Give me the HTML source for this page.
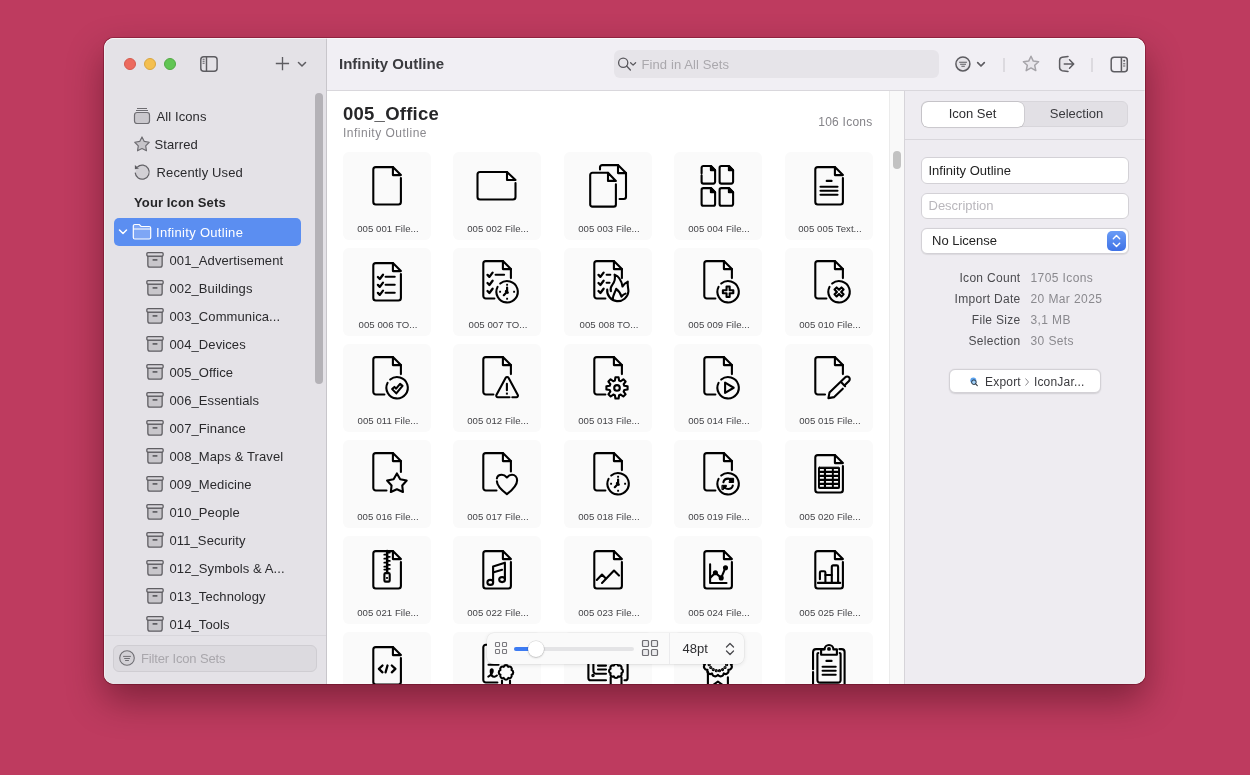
<!DOCTYPE html>
<html><head><meta charset="utf-8">
<style>
*{box-sizing:border-box;margin:0;padding:0}
html,body{width:1250px;height:775px;overflow:hidden}
body{background:#be3b5f;font-family:"Liberation Sans",sans-serif;position:relative;color:#262628}
.abs{position:absolute}
#win{will-change:transform;position:absolute;left:104px;top:38px;width:1041px;height:646px;border-radius:10px;overflow:hidden;background:#fff;
 box-shadow:0 0 0 1px rgba(80,0,20,.35),0 16px 36px rgba(40,0,10,.42)}
#side{position:absolute;left:0;top:0;width:223px;height:646px;background:#e4e2e7;border-right:1px solid #c8c6cb}
.tl{position:absolute;top:20px;width:12px;height:12px;border-radius:50%}
.item{position:absolute;left:0;height:28px;line-height:28px;font-size:13px;color:#2a2a2d;white-space:nowrap}
.set{position:absolute;left:42px;height:28px;line-height:28px;font-size:13px;color:#2a2a2d;white-space:nowrap}
.set .arch{position:absolute;left:0;top:6px}
.set span{position:absolute;left:23.5px;top:1px;letter-spacing:.1px}
#tb{position:absolute;left:223px;top:0;width:818px;height:53px;background:#f1eff4;border-bottom:1px solid #d9d7dc}
#content{position:absolute;left:223px;top:53px;width:577px;height:593px;background:#fff}
.cell{position:absolute;width:88px;height:88px;border-radius:6px;background:#fafafa}
.cell .ic{position:absolute;left:20px;top:10px;fill:none;stroke:#000;stroke-width:2.1;stroke-linecap:round;stroke-linejoin:round}
.cell .lbl{position:absolute;left:1px;top:70px;width:88px;text-align:center;font-size:9.6px;line-height:14px;color:#444448;white-space:nowrap;letter-spacing:.05px}
#insp{position:absolute;left:800px;top:53px;width:241px;height:593px;background:#eeecf1;border-left:1px solid #d6d4d9}
.field{position:absolute;left:16px;width:208px;background:#fff;border:1px solid #d3d1d6;border-radius:6px;font-size:13px;white-space:nowrap}
.rowl{position:absolute;right:124.5px;font-size:12px;color:#4a4a4e;white-space:nowrap;text-align:right;letter-spacing:.3px;margin-top:1px}
.rowv{position:absolute;left:125.5px;font-size:12px;color:#8a898e;white-space:nowrap;letter-spacing:.4px;margin-top:1px}
</style></head><body>
<div id="win">
 <div id="side">
  <div class="tl" style="left:20px;background:#ec6a5e;border:.5px solid #d55a4f"></div>
  <div class="tl" style="left:40px;background:#f4bf4f;border:.5px solid #d9a63f"></div>
  <div class="tl" style="left:60px;background:#61c554;border:.5px solid #52a944"></div>
  <svg class="abs" style="left:95px;top:17px" width="20" height="18" viewBox="0 0 20 18"><rect x="1.8" y="1.7" width="16.3" height="14.5" rx="3" fill="none" stroke="#5d5c61" stroke-width="1.45"/><path d="M7.5 1.7v14.5" stroke="#5d5c61" stroke-width="1.45"/><path d="M3.6 4.2h2M3.6 6.2h2M3.6 8.3h2" stroke="#5d5c61" stroke-width="1.1"/></svg>
  <svg class="abs" style="left:171px;top:18px" width="15" height="15" viewBox="0 0 15 15"><path d="M11.7 0.9v13.3M5 7.5h13.3" transform="translate(-4.2 0)" stroke="#5d5c61" stroke-width="1.35"/></svg>
  <svg class="abs" style="left:193px;top:23px" width="10" height="7" viewBox="0 0 10 7"><path d="M1.5 1.5l3.5 3.5 3.5-3.5" fill="none" stroke="#5d5c61" stroke-width="1.5" stroke-linecap="round" stroke-linejoin="round"/></svg>

  <div class="item" style="top:64px;left:29px">
   <svg class="abs" style="left:0;top:5px" width="18" height="18" viewBox="0 0 18 18"><path d="M4 1.5h10M3 3.5h12" stroke="#6e6d72" stroke-width="1"/><rect x="1.5" y="5.5" width="15" height="11" rx="2.5" fill="#cac8cd" stroke="#6e6d72" stroke-width="1.2"/></svg>
   <span class="abs" style="left:23.5px;top:1px;letter-spacing:.1px">All Icons</span></div>
  <div class="item" style="top:92px;left:29px">
   <svg class="abs" style="left:0;top:5px" width="18" height="18" viewBox="0 0 18 18"><path d="M9.00 2.00 L11.29 6.44 L16.23 7.25 L12.71 10.81 L13.47 15.75 L9.00 13.50 L4.53 15.75 L5.29 10.81 L1.77 7.25 L6.71 6.44z" fill="#c6c4c9" stroke="#6e6d72" stroke-width="1.2" stroke-linejoin="round"/></svg>
   <span class="abs" style="left:21.5px;top:1px;letter-spacing:.1px">Starred</span></div>
  <div class="item" style="top:120px;left:29px">
   <svg class="abs" style="left:0;top:5px" width="18" height="18" viewBox="0 0 18 18"><circle cx="9.1" cy="8.9" r="6.6" fill="#d2d0d5"/><path d="M4.4 4A7 7 0 1 1 2.2 9.6" fill="none" stroke="#626166" stroke-width="1.2"/><path d="M1.9 2v4.3l4-.7z" fill="#5d5c61"/></svg>
   <span class="abs" style="left:23.5px;top:1px;letter-spacing:.15px">Recently Used</span></div>
  <div class="item" style="top:151px;left:30px;font-weight:bold;color:#262628;letter-spacing:.12px">Your Icon Sets</div>
  <div class="abs" style="left:10px;top:180px;width:187px;height:28px;border-radius:5px;background:#5b8ef1"></div>
  <svg class="abs" style="left:14px;top:190px" width="10" height="8" viewBox="0 0 10 8"><path d="M1.5 2l3.5 3.5 3.5-3.5" fill="none" stroke="#fff" stroke-width="1.5" stroke-linecap="round" stroke-linejoin="round"/></svg>
  <svg class="abs" style="left:28px;top:185px" width="20" height="17" viewBox="0 0 20 17"><path d="M1.3 3a1.5 1.5 0 0 1 1.5-1.5h4.5l1.8 2h8.1a1.5 1.5 0 0 1 1.5 1.5v9.5a1.5 1.5 0 0 1-1.5 1.5H2.8a1.5 1.5 0 0 1-1.5-1.5z" fill="#7ea6f5" stroke="#fff" stroke-width="1.2"/><path d="M1.3 6h17.4" stroke="#fff" stroke-width="1.2"/></svg>
  <div class="item" style="top:181px;left:52px;color:#fff;letter-spacing:.3px">Infinity Outline</div>
  <div class="set" style="top:208px"><svg class="arch" width="18" height="17" viewBox="0 0 18 17"><path d="M1.85 4v9a2.2 2.2 0 0 0 2.2 2.2h9.9a2.2 2.2 0 0 0 2.2-2.2V4z" fill="#c8c6cb" stroke="#5f5e63" stroke-width="1.3"/><rect x=".85" y=".65" width="16.3" height="3.4" rx="1.1" fill="#d8d6db" stroke="#5f5e63" stroke-width="1.3"/><path d="M6.6 7.9h4.8" stroke="#5f5e63" stroke-width="1.7"/></svg><span>001_Advertisement</span></div><div class="set" style="top:236px"><svg class="arch" width="18" height="17" viewBox="0 0 18 17"><path d="M1.85 4v9a2.2 2.2 0 0 0 2.2 2.2h9.9a2.2 2.2 0 0 0 2.2-2.2V4z" fill="#c8c6cb" stroke="#5f5e63" stroke-width="1.3"/><rect x=".85" y=".65" width="16.3" height="3.4" rx="1.1" fill="#d8d6db" stroke="#5f5e63" stroke-width="1.3"/><path d="M6.6 7.9h4.8" stroke="#5f5e63" stroke-width="1.7"/></svg><span>002_Buildings</span></div><div class="set" style="top:264px"><svg class="arch" width="18" height="17" viewBox="0 0 18 17"><path d="M1.85 4v9a2.2 2.2 0 0 0 2.2 2.2h9.9a2.2 2.2 0 0 0 2.2-2.2V4z" fill="#c8c6cb" stroke="#5f5e63" stroke-width="1.3"/><rect x=".85" y=".65" width="16.3" height="3.4" rx="1.1" fill="#d8d6db" stroke="#5f5e63" stroke-width="1.3"/><path d="M6.6 7.9h4.8" stroke="#5f5e63" stroke-width="1.7"/></svg><span>003_Communica...</span></div><div class="set" style="top:292px"><svg class="arch" width="18" height="17" viewBox="0 0 18 17"><path d="M1.85 4v9a2.2 2.2 0 0 0 2.2 2.2h9.9a2.2 2.2 0 0 0 2.2-2.2V4z" fill="#c8c6cb" stroke="#5f5e63" stroke-width="1.3"/><rect x=".85" y=".65" width="16.3" height="3.4" rx="1.1" fill="#d8d6db" stroke="#5f5e63" stroke-width="1.3"/><path d="M6.6 7.9h4.8" stroke="#5f5e63" stroke-width="1.7"/></svg><span>004_Devices</span></div><div class="set" style="top:320px"><svg class="arch" width="18" height="17" viewBox="0 0 18 17"><path d="M1.85 4v9a2.2 2.2 0 0 0 2.2 2.2h9.9a2.2 2.2 0 0 0 2.2-2.2V4z" fill="#c8c6cb" stroke="#5f5e63" stroke-width="1.3"/><rect x=".85" y=".65" width="16.3" height="3.4" rx="1.1" fill="#d8d6db" stroke="#5f5e63" stroke-width="1.3"/><path d="M6.6 7.9h4.8" stroke="#5f5e63" stroke-width="1.7"/></svg><span>005_Office</span></div><div class="set" style="top:348px"><svg class="arch" width="18" height="17" viewBox="0 0 18 17"><path d="M1.85 4v9a2.2 2.2 0 0 0 2.2 2.2h9.9a2.2 2.2 0 0 0 2.2-2.2V4z" fill="#c8c6cb" stroke="#5f5e63" stroke-width="1.3"/><rect x=".85" y=".65" width="16.3" height="3.4" rx="1.1" fill="#d8d6db" stroke="#5f5e63" stroke-width="1.3"/><path d="M6.6 7.9h4.8" stroke="#5f5e63" stroke-width="1.7"/></svg><span>006_Essentials</span></div><div class="set" style="top:376px"><svg class="arch" width="18" height="17" viewBox="0 0 18 17"><path d="M1.85 4v9a2.2 2.2 0 0 0 2.2 2.2h9.9a2.2 2.2 0 0 0 2.2-2.2V4z" fill="#c8c6cb" stroke="#5f5e63" stroke-width="1.3"/><rect x=".85" y=".65" width="16.3" height="3.4" rx="1.1" fill="#d8d6db" stroke="#5f5e63" stroke-width="1.3"/><path d="M6.6 7.9h4.8" stroke="#5f5e63" stroke-width="1.7"/></svg><span>007_Finance</span></div><div class="set" style="top:404px"><svg class="arch" width="18" height="17" viewBox="0 0 18 17"><path d="M1.85 4v9a2.2 2.2 0 0 0 2.2 2.2h9.9a2.2 2.2 0 0 0 2.2-2.2V4z" fill="#c8c6cb" stroke="#5f5e63" stroke-width="1.3"/><rect x=".85" y=".65" width="16.3" height="3.4" rx="1.1" fill="#d8d6db" stroke="#5f5e63" stroke-width="1.3"/><path d="M6.6 7.9h4.8" stroke="#5f5e63" stroke-width="1.7"/></svg><span>008_Maps &amp; Travel</span></div><div class="set" style="top:432px"><svg class="arch" width="18" height="17" viewBox="0 0 18 17"><path d="M1.85 4v9a2.2 2.2 0 0 0 2.2 2.2h9.9a2.2 2.2 0 0 0 2.2-2.2V4z" fill="#c8c6cb" stroke="#5f5e63" stroke-width="1.3"/><rect x=".85" y=".65" width="16.3" height="3.4" rx="1.1" fill="#d8d6db" stroke="#5f5e63" stroke-width="1.3"/><path d="M6.6 7.9h4.8" stroke="#5f5e63" stroke-width="1.7"/></svg><span>009_Medicine</span></div><div class="set" style="top:460px"><svg class="arch" width="18" height="17" viewBox="0 0 18 17"><path d="M1.85 4v9a2.2 2.2 0 0 0 2.2 2.2h9.9a2.2 2.2 0 0 0 2.2-2.2V4z" fill="#c8c6cb" stroke="#5f5e63" stroke-width="1.3"/><rect x=".85" y=".65" width="16.3" height="3.4" rx="1.1" fill="#d8d6db" stroke="#5f5e63" stroke-width="1.3"/><path d="M6.6 7.9h4.8" stroke="#5f5e63" stroke-width="1.7"/></svg><span>010_People</span></div><div class="set" style="top:488px"><svg class="arch" width="18" height="17" viewBox="0 0 18 17"><path d="M1.85 4v9a2.2 2.2 0 0 0 2.2 2.2h9.9a2.2 2.2 0 0 0 2.2-2.2V4z" fill="#c8c6cb" stroke="#5f5e63" stroke-width="1.3"/><rect x=".85" y=".65" width="16.3" height="3.4" rx="1.1" fill="#d8d6db" stroke="#5f5e63" stroke-width="1.3"/><path d="M6.6 7.9h4.8" stroke="#5f5e63" stroke-width="1.7"/></svg><span>011_Security</span></div><div class="set" style="top:516px"><svg class="arch" width="18" height="17" viewBox="0 0 18 17"><path d="M1.85 4v9a2.2 2.2 0 0 0 2.2 2.2h9.9a2.2 2.2 0 0 0 2.2-2.2V4z" fill="#c8c6cb" stroke="#5f5e63" stroke-width="1.3"/><rect x=".85" y=".65" width="16.3" height="3.4" rx="1.1" fill="#d8d6db" stroke="#5f5e63" stroke-width="1.3"/><path d="M6.6 7.9h4.8" stroke="#5f5e63" stroke-width="1.7"/></svg><span>012_Symbols &amp; A...</span></div><div class="set" style="top:544px"><svg class="arch" width="18" height="17" viewBox="0 0 18 17"><path d="M1.85 4v9a2.2 2.2 0 0 0 2.2 2.2h9.9a2.2 2.2 0 0 0 2.2-2.2V4z" fill="#c8c6cb" stroke="#5f5e63" stroke-width="1.3"/><rect x=".85" y=".65" width="16.3" height="3.4" rx="1.1" fill="#d8d6db" stroke="#5f5e63" stroke-width="1.3"/><path d="M6.6 7.9h4.8" stroke="#5f5e63" stroke-width="1.7"/></svg><span>013_Technology</span></div><div class="set" style="top:572px"><svg class="arch" width="18" height="17" viewBox="0 0 18 17"><path d="M1.85 4v9a2.2 2.2 0 0 0 2.2 2.2h9.9a2.2 2.2 0 0 0 2.2-2.2V4z" fill="#c8c6cb" stroke="#5f5e63" stroke-width="1.3"/><rect x=".85" y=".65" width="16.3" height="3.4" rx="1.1" fill="#d8d6db" stroke="#5f5e63" stroke-width="1.3"/><path d="M6.6 7.9h4.8" stroke="#5f5e63" stroke-width="1.7"/></svg><span>014_Tools</span></div>
  <div class="abs" style="left:211px;top:55px;width:8px;height:291px;border-radius:4px;background:#b4b2b7"></div>
  <div class="abs" style="left:0;top:597px;width:222px;height:1px;background:#d8d6db"></div>
  <div class="abs" style="left:9px;top:607px;width:204px;height:27px;border-radius:6px;background:#dcdadf;border:1px solid #cfcdd2"></div>
  <svg class="abs" style="left:15px;top:612px" width="17" height="17" viewBox="0 0 17 17"><circle cx="8" cy="8" r="7.3" fill="#d3d1d6" stroke="#6f6e73" stroke-width="1.1"/><path d="M4.1 6.4h7.8M5.2 8.5h5.7M6.1 10.5h3.8" stroke="#6f6e73" stroke-width="1"/></svg>
  <div class="item" style="top:607px;left:37px;height:27px;line-height:27px;color:#a9a7ac;letter-spacing:-.15px">Filter Icon Sets</div>
 </div>

 <div id="tb">
  <div class="abs" style="left:12px;top:0;height:52px;line-height:52px;font-size:15px;font-weight:bold;color:#3b3b3f;white-space:nowrap">Infinity Outline</div>
  <div class="abs" style="left:287px;top:12px;width:325px;height:28px;border-radius:6px;background:#e6e4e9"></div>
  <svg class="abs" style="left:290px;top:56px;top:18px" width="24" height="18" viewBox="0 0 24 18"><circle cx="6.2" cy="6.7" r="4.6" fill="none" stroke="#5a595e" stroke-width="1.3"/><path d="M9.6 10.1l3.8 3.8" stroke="#5a595e" stroke-width="1.4" stroke-linecap="round"/><path d="M13.6 6.7l2.5 2.4 2.5-2.4" fill="none" stroke="#5a595e" stroke-width="1.3" stroke-linecap="round" stroke-linejoin="round"/></svg>
  <div class="abs" style="left:314.5px;top:13px;height:28px;line-height:28px;font-size:13px;color:#aaa8ad;white-space:nowrap;letter-spacing:.1px">Find in All Sets</div>

  <svg class="abs" style="left:626px;top:16px" width="20" height="20" viewBox="0 0 20 20"><circle cx="9.9" cy="9.9" r="7" fill="#e6e4e9" stroke="#5d5c61" stroke-width="1.5"/><path d="M6.1 8.3h7.8M7.1 10.2h5.9M8.4 12.3h3.4" stroke="#5d5c61" stroke-width="1.1"/></svg>
  <svg class="abs" style="left:648px;top:21.5px" width="12" height="8" viewBox="0 0 12 8"><path d="M2.7 2.7l3.3 3.3 3.3-3.3" fill="none" stroke="#5d5c61" stroke-width="1.7" stroke-linecap="round" stroke-linejoin="round"/></svg>
  <div class="abs" style="left:676.3px;top:20px;width:1.5px;height:14px;background:#dcdadf"></div>
  <svg class="abs" style="left:694px;top:16px" width="20" height="20" viewBox="0 0 20 20"><path d="M10 2.2l2.3 4.9 5.3.6-3.9 3.6 1.1 5.3L10 13.9l-4.8 2.7 1.1-5.3-3.9-3.6 5.3-.6z" fill="#e9e7ec" stroke="#a6a4a9" stroke-width="1.5" stroke-linejoin="round"/></svg>
  <svg class="abs" style="left:729px;top:16px" width="20" height="20" viewBox="0 0 20 20"><path d="M12 2.4L6.2 3.3C4.6 3.6 3.6 4.6 3.6 6.4V13.6C3.6 15.4 4.6 16.4 6.2 16.7L12 17.4" fill="#e8e6eb" stroke="#5d5c61" stroke-width="1.5" stroke-linecap="round"/><path d="M8.3 10h9.2M13.5 5.8l4.2 4.2-4.2 4.2" fill="none" stroke="#5d5c61" stroke-width="1.5" stroke-linecap="round" stroke-linejoin="round"/></svg>
  <div class="abs" style="left:764.3px;top:20px;width:1.5px;height:14px;background:#dcdadf"></div>
  <svg class="abs" style="left:782.8px;top:16.5px" width="20" height="18" viewBox="0 0 20 18"><rect x="11.4" y="2.3" width="5.9" height="14" fill="#e9e7ec"/><rect x="1.2" y="2.3" width="16.1" height="14.5" rx="3" fill="none" stroke="#5d5c61" stroke-width="1.5"/><path d="M11.4 2.3v14.5" stroke="#5d5c61" stroke-width="1.5"/><circle cx="14.2" cy="5.8" r="1" fill="#5d5c61"/><path d="M13.1 8.8h2.2M13.1 11h2.2" stroke="#5d5c61" stroke-width="1"/></svg>
 </div>

 <div id="content">
  <div class="abs" style="left:16px;top:11.5px;font-size:18.5px;font-weight:bold;color:#262628;line-height:22px;letter-spacing:.25px;white-space:nowrap">005_Office</div>
  <div class="abs" style="left:16px;top:35px;font-size:12px;color:#8a898e;line-height:14px;letter-spacing:.5px;white-space:nowrap">Infinity Outline</div>
  <div class="abs" style="right:31.5px;top:24px;font-size:12px;color:#858489;line-height:14px;white-space:nowrap;letter-spacing:.25px">106 Icons</div>
  <div class="cell" style="left:16px;top:61px"><svg class="ic" width="48" height="48" viewBox="0 0 48 48"><path d="M29.9 5.1H12.8a2.5 2.5 0 0 0-2.5 2.5V40.0a2.5 2.5 0 0 0 2.5 2.5H35.4a2.5 2.5 0 0 0 2.5-2.5V16.1"/><path d="M29.9 5.1V13.1H37.9z"/></svg><div class="lbl">005 001 File...</div></div>
<div class="cell" style="left:126px;top:61px"><svg class="ic" width="48" height="48" viewBox="0 0 48 48"><path d="M34 10H7a2.5 2.5 0 0 0-2.5 2.5v22.5a2.5 2.5 0 0 0 2.5 2.5h33a2.5 2.5 0 0 0 2.5-2.5V21"/><path d="M34 10v8h8.5z"/></svg><div class="lbl">005 002 File...</div></div>
<div class="cell" style="left:237px;top:61px"><svg class="ic" width="48" height="48" viewBox="0 0 48 48"><path d="M16 7.4V5.3a2.2 2.2 0 0 1 2.2-2.2H34l8 8v23.7a2.2 2.2 0 0 1-2.2 2.2H35.6"/><path d="M34 3.1v8h8"/><path d="M24 10.8H8.4a2.2 2.2 0 0 0-2.2 2.2v29.4a2.2 2.2 0 0 0 2.2 2.2h21.3a2.2 2.2 0 0 0 2.2-2.2V22.3"/><path d="M24 10.8v8.1h7.9z"/></svg><div class="lbl">005 003 File...</div></div>
<div class="cell" style="left:347px;top:61px"><svg class="ic" width="48" height="48" viewBox="0 0 48 48"><path d="M7.6 11.2V5.8a1.8 1.8 0 0 1 1.8-1.8H16.900000000000002l4.2 4.2V19.8a1.8 1.8 0 0 1-1.8 1.8h-9.9a1.8 1.8 0 0 1-1.8-1.8V13.4"/><path d="M16.900000000000002 4v4.2h4.2z" fill="#000"/><path d="M34.9 4H27.400000000000002a1.8 1.8 0 0 0-1.8 1.8V19.8a1.8 1.8 0 0 0 1.8 1.8h9.9a1.8 1.8 0 0 0 1.8-1.8V8.2z"/><path d="M34.9 4v4.2h4.2z" fill="#000"/><path d="M16.900000000000002 26.1H9.4a1.8 1.8 0 0 0-1.8 1.8V41.900000000000006a1.8 1.8 0 0 0 1.8 1.8h9.9a1.8 1.8 0 0 0 1.8-1.8V30.3z"/><path d="M16.900000000000002 26.1v4.2h4.2z" fill="#000"/><path d="M34.9 26.1H27.400000000000002a1.8 1.8 0 0 0-1.8 1.8V41.900000000000006a1.8 1.8 0 0 0 1.8 1.8h9.9a1.8 1.8 0 0 0 1.8-1.8V30.3z"/><path d="M34.9 26.1v4.2h4.2z" fill="#000"/></svg><div class="lbl">005 004 File...</div></div>
<div class="cell" style="left:458px;top:61px"><svg class="ic" width="48" height="48" viewBox="0 0 48 48"><path d="M29.9 5.1H12.8a2.5 2.5 0 0 0-2.5 2.5V40.0a2.5 2.5 0 0 0 2.5 2.5H35.4a2.5 2.5 0 0 0 2.5-2.5V16.1"/><path d="M29.9 5.1V13.1H37.9z"/><path d="M21.7 18.9H26.6"/><path d="M15.5 24.8H32.5"/><path d="M15.5 28.8H32.5"/><path d="M15.5 32.8H32.5"/></svg><div class="lbl">005 005 Text...</div></div>
<div class="cell" style="left:16px;top:157px"><svg class="ic" width="48" height="48" viewBox="0 0 48 48"><path d="M29.9 5.1H12.8a2.5 2.5 0 0 0-2.5 2.5V40.0a2.5 2.5 0 0 0 2.5 2.5H35.4a2.5 2.5 0 0 0 2.5-2.5V16.1"/><path d="M29.9 5.1V13.1H37.9z"/><path d="M14.9 19.0l1.9 2 3.2-4.3" stroke-width="2.3"/><path d="M14.9 26.9l1.9 2 3.2-4.3" stroke-width="2.3"/><path d="M14.9 34.900000000000006l1.9 2 3.2-4.3" stroke-width="2.3"/><path d="M22.6 18.8H31.7"/><path d="M22.6 26.7H31.7"/><path d="M22.6 34.7H31.7"/></svg><div class="lbl">005 006 TO...</div></div>
<div class="cell" style="left:126px;top:157px"><svg class="ic" width="48" height="48" viewBox="0 0 48 48"><path d="M29.9 3.1H12.8a2.5 2.5 0 0 0-2.5 2.5V38.0a2.5 2.5 0 0 0 2.5 2.5H21.4"/><path d="M29.9 3.1V11.1H37.9z"/><path d="M37.9 11.1V20.1"/><path d="M14.5 16.9l1.9 2 3.2-4.3" stroke-width="2.3"/><path d="M14.5 25.0l1.9 2 3.2-4.3" stroke-width="2.3"/><path d="M14.5 33.0l1.9 2 3.2-4.3" stroke-width="2.3"/><path d="M22.6 16.7H31.1"/><path d="M27.22 25.55A10.7 10.7 0 1 1 24.57 28.89"/><path d="M34.1 29.55V33.75l-3.3 3.4" stroke-width="2.2"/><path d="M33.1 33.15l1.5 1.5" stroke-width="2.6"/><rect x="33.15" y="25.8" width="1.9" height="1.9" fill="#000" stroke="none"/><rect x="33.15" y="39.8" width="1.9" height="1.9" fill="#000" stroke="none"/><rect x="26.150000000000002" y="32.8" width="1.9" height="1.9" fill="#000" stroke="none"/><rect x="40.15" y="32.8" width="1.9" height="1.9" fill="#000" stroke="none"/></svg><div class="lbl">005 007 TO...</div></div>
<div class="cell" style="left:237px;top:157px"><svg class="ic" width="48" height="48" viewBox="0 0 48 48"><path d="M29.9 3.1H12.8a2.5 2.5 0 0 0-2.5 2.5V38.0a2.5 2.5 0 0 0 2.5 2.5H21.4"/><path d="M29.9 3.1V11.1H37.9z"/><path d="M37.9 11.1V20.1"/><path d="M14.5 16.9l1.9 2 3.2-4.3" stroke-width="2.3"/><path d="M14.5 25.0l1.9 2 3.2-4.3" stroke-width="2.3"/><path d="M14.5 33.0l1.9 2 3.2-4.3" stroke-width="2.3"/><path d="M22.6 16.7H26.3"/><path d="M22.6 24.8H25.5"/><path d="M23.2 31.5A10.6 10.6 0 0 0 44.4 33.5C44.4 30 43.2 27 43.8 23.6C41.4 24.8 39.6 26.4 38.5 28.5C37.5 22.5 34.5 18.2 30.6 16.6C31.8 21.5 30.2 24.5 28.3 26.8C26.6 28.9 26.3 31.2 26.9 33.3"/><path d="M28.8 41.5C28.6 37.4 31.2 34.4 32.2 30.8C34.6 32.6 36.6 35.4 37.5 38.7C38.6 37.3 40 36.2 41.5 35.6"/></svg><div class="lbl">005 008 TO...</div></div>
<div class="cell" style="left:347px;top:157px"><svg class="ic" width="48" height="48" viewBox="0 0 48 48"><path d="M29.9 3.1H12.8a2.5 2.5 0 0 0-2.5 2.5V38.0a2.5 2.5 0 0 0 2.5 2.5H21.4"/><path d="M29.9 3.1V11.1H37.9z"/><path d="M37.9 11.1V20.1"/><path d="M27.22 25.55A10.7 10.7 0 1 1 24.57 28.89"/><path d="M32.55 28.55 L35.65 28.55 L35.65 32.20 L39.30 32.20 L39.30 35.30 L35.65 35.30 L35.65 38.95 L32.55 38.95 L32.55 35.30 L28.90 35.30 L28.90 32.20 L32.55 32.20z"/></svg><div class="lbl">005 009 File...</div></div>
<div class="cell" style="left:458px;top:157px"><svg class="ic" width="48" height="48" viewBox="0 0 48 48"><path d="M29.9 3.1H12.8a2.5 2.5 0 0 0-2.5 2.5V38.0a2.5 2.5 0 0 0 2.5 2.5H21.4"/><path d="M29.9 3.1V11.1H37.9z"/><path d="M37.9 11.1V20.1"/><path d="M27.17 25.55A10.7 10.7 0 1 1 24.52 28.89"/><path d="M36.50 29.37 L38.58 31.45 L36.13 33.90 L38.58 36.35 L36.50 38.43 L34.05 35.98 L31.60 38.43 L29.52 36.35 L31.97 33.90 L29.52 31.45 L31.60 29.37 L34.05 31.82z"/></svg><div class="lbl">005 010 File...</div></div>
<div class="cell" style="left:16px;top:253px"><svg class="ic" width="48" height="48" viewBox="0 0 48 48"><path d="M29.9 3.1H12.8a2.5 2.5 0 0 0-2.5 2.5V38.0a2.5 2.5 0 0 0 2.5 2.5H21.4"/><path d="M29.9 3.1V11.1H37.9z"/><path d="M37.9 11.1V20.1"/><path d="M27.22 25.55A10.7 10.7 0 1 1 24.57 28.89"/><path d="M29.15 35.11 L33.29 39.39 L39.53 31.93 L37.07 29.87 L33.11 34.61 L31.45 32.89z"/></svg><div class="lbl">005 011 File...</div></div>
<div class="cell" style="left:126px;top:253px"><svg class="ic" width="48" height="48" viewBox="0 0 48 48"><path d="M29.9 3.1H12.8a2.5 2.5 0 0 0-2.5 2.5V38.0a2.5 2.5 0 0 0 2.5 2.5H20.4"/><path d="M29.9 3.1V11.1H37.9z"/><path d="M37.9 11.1V20.1"/><g transform="translate(.5 0)"><path d="M36 43.3H24.3a1.6 1.6 0 0 1-1.4-2.3l9.3-17.2a1.6 1.6 0 0 1 2.8 0l9.3 17.2a1.6 1.6 0 0 1-1.4 2.3h-4.1"/><path d="M33.4 29.7v6.5"/><rect x="32.4" y="38.6" width="2" height="2" fill="#000" stroke="none"/></g></svg><div class="lbl">005 012 File...</div></div>
<div class="cell" style="left:237px;top:253px"><svg class="ic" width="48" height="48" viewBox="0 0 48 48"><path d="M29.9 3.1H12.8a2.5 2.5 0 0 0-2.5 2.5V38.0a2.5 2.5 0 0 0 2.5 2.5H21.4"/><path d="M29.9 3.1V11.1H37.9z"/><path d="M37.9 11.1V20.1"/><path d="M40.30 31.80 L43.58 32.30 L43.58 35.50 L40.30 36.00 L39.65 37.58 L41.61 40.25 L39.35 42.51 L36.68 40.55 L35.10 41.20 L34.60 44.48 L31.40 44.48 L30.90 41.20 L29.32 40.55 L26.65 42.51 L24.39 40.25 L26.35 37.58 L25.70 36.00 L22.42 35.50 L22.42 32.30 L25.70 31.80 L26.35 30.22 L24.39 27.55 L26.65 25.29 L29.32 27.25 L30.90 26.60 L31.40 23.32 L34.60 23.32 L35.10 26.60 L36.68 27.25 L39.35 25.29 L41.61 27.55 L39.65 30.22z"/><circle cx="33.0" cy="33.9" r="2.8"/></svg><div class="lbl">005 013 File...</div></div>
<div class="cell" style="left:347px;top:253px"><svg class="ic" width="48" height="48" viewBox="0 0 48 48"><path d="M29.9 3.1H12.8a2.5 2.5 0 0 0-2.5 2.5V38.0a2.5 2.5 0 0 0 2.5 2.5H21.4"/><path d="M29.9 3.1V11.1H37.9z"/><path d="M37.9 11.1V20.1"/><path d="M27.22 25.55A10.7 10.7 0 1 1 24.57 28.89"/><path d="M31.1 28.6v10.3l8.6-5.15z"/></svg><div class="lbl">005 014 File...</div></div>
<div class="cell" style="left:458px;top:253px"><svg class="ic" width="48" height="48" viewBox="0 0 48 48"><path d="M29.9 3.1H12.8a2.5 2.5 0 0 0-2.5 2.5V38.0a2.5 2.5 0 0 0 2.5 2.5H20"/><path d="M29.9 3.1V11.1H37.9z"/><path d="M37.9 11.1V20.1"/><path d="M37.8 34.7L29.2 43.1 23.4 44.1 24.5 38.6 40.3 23.2a2.6 2.6 0 0 1 3.7 3.7L39.9 31"/><path d="M36.5 28.6l3.6 3.6"/></svg><div class="lbl">005 015 File...</div></div>
<div class="cell" style="left:16px;top:349px"><svg class="ic" width="48" height="48" viewBox="0 0 48 48"><path d="M29.9 3.1H12.8a2.5 2.5 0 0 0-2.5 2.5V38.0a2.5 2.5 0 0 0 2.5 2.5H23.5"/><path d="M29.9 3.1V11.1H37.9z"/><path d="M37.9 11.1V22"/><path d="M33.90 23.40 L37.19 29.17 L43.70 30.52 L39.23 35.43 L39.95 42.03 L33.90 39.30 L27.85 42.03 L28.57 35.43 L24.10 30.52 L30.61 29.17z"/></svg><div class="lbl">005 016 File...</div></div>
<div class="cell" style="left:126px;top:349px"><svg class="ic" width="48" height="48" viewBox="0 0 48 48"><path d="M29.9 3.1H12.8a2.5 2.5 0 0 0-2.5 2.5V38.0a2.5 2.5 0 0 0 2.5 2.5H23.5"/><path d="M29.9 3.1V11.1H37.9z"/><path d="M37.9 11.1V21.4"/><path transform="translate(.5 0)" d="M23.4 28.4C23.8 26.2 25.7 24.8 28.3 24.8C30.3 24.8 31.9 25.8 33.4 27.5C34.9 25.8 36.5 24.8 38.5 24.8C41.5 24.8 43.6 27.2 43.6 30.5C43.6 36 38.5 40.3 33.4 44.2C28.3 40.3 23.4 36 23.4 31.3"/></svg><div class="lbl">005 017 File...</div></div>
<div class="cell" style="left:237px;top:349px"><svg class="ic" width="48" height="48" viewBox="0 0 48 48"><path d="M29.9 3.1H12.8a2.5 2.5 0 0 0-2.5 2.5V38.0a2.5 2.5 0 0 0 2.5 2.5H21.4"/><path d="M29.9 3.1V11.1H37.9z"/><path d="M37.9 11.1V20.1"/><path d="M27.22 25.55A10.7 10.7 0 1 1 24.57 28.89"/><path d="M34.1 29.55V33.75l-3.3 3.4" stroke-width="2.2"/><path d="M33.1 33.15l1.5 1.5" stroke-width="2.6"/><rect x="33.15" y="25.8" width="1.9" height="1.9" fill="#000" stroke="none"/><rect x="33.15" y="39.8" width="1.9" height="1.9" fill="#000" stroke="none"/><rect x="26.150000000000002" y="32.8" width="1.9" height="1.9" fill="#000" stroke="none"/><rect x="40.15" y="32.8" width="1.9" height="1.9" fill="#000" stroke="none"/></svg><div class="lbl">005 018 File...</div></div>
<div class="cell" style="left:347px;top:349px"><svg class="ic" width="48" height="48" viewBox="0 0 48 48"><path d="M29.9 3.1H12.8a2.5 2.5 0 0 0-2.5 2.5V38.0a2.5 2.5 0 0 0 2.5 2.5H21.4"/><path d="M29.9 3.1V11.1H37.9z"/><path d="M37.9 11.1V20.1"/><path d="M27.22 25.55A10.7 10.7 0 1 1 24.57 28.89"/><g transform="translate(.5 0)"><path d="M28.9 32.2C29.4 29.9 31.3 28.6 33.6 28.6C35.1 28.6 36.3 29.2 37.1 30.2"/><path d="M36 28.3h3.1v4.2h-4.2z" fill="#000" stroke-width="1"/><path d="M38.3 35.6C37.8 37.8 35.9 39 33.6 39C32.2 39 31 38.4 30.1 37.5"/><path d="M27.8 35.3h4.1v1.2l-2.9 3.1h-1.2z" fill="#000" stroke-width="1"/></g></svg><div class="lbl">005 019 File...</div></div>
<div class="cell" style="left:458px;top:349px"><svg class="ic" width="48" height="48" viewBox="0 0 48 48"><path d="M29.9 5.1H12.8a2.5 2.5 0 0 0-2.5 2.5V40.0a2.5 2.5 0 0 0 2.5 2.5H35.4a2.5 2.5 0 0 0 2.5-2.5V16.1"/><path d="M29.9 5.1V13.1H37.9z"/><rect x="13.5" y="17.2" width="21" height="21.3" rx=".8" fill="#000" stroke-width="1"/><rect x="14.9" y="18.9" width="4" height="1.8" rx=".3" fill="#fafafa" stroke="none"/><rect x="21" y="18.9" width="5.9" height="1.8" rx=".3" fill="#fafafa" stroke="none"/><rect x="28.8" y="18.9" width="4.3" height="1.8" rx=".3" fill="#fafafa" stroke="none"/><rect x="14.9" y="22.9" width="4" height="1.8" rx=".3" fill="#fafafa" stroke="none"/><rect x="21" y="22.9" width="5.9" height="1.8" rx=".3" fill="#fafafa" stroke="none"/><rect x="28.8" y="22.9" width="4.3" height="1.8" rx=".3" fill="#fafafa" stroke="none"/><rect x="14.9" y="26.9" width="4" height="1.8" rx=".3" fill="#fafafa" stroke="none"/><rect x="21" y="26.9" width="5.9" height="1.8" rx=".3" fill="#fafafa" stroke="none"/><rect x="28.8" y="26.9" width="4.3" height="1.8" rx=".3" fill="#fafafa" stroke="none"/><rect x="14.9" y="31" width="4" height="1.8" rx=".3" fill="#fafafa" stroke="none"/><rect x="21" y="31" width="5.9" height="1.8" rx=".3" fill="#fafafa" stroke="none"/><rect x="28.8" y="31" width="4.3" height="1.8" rx=".3" fill="#fafafa" stroke="none"/><rect x="14.9" y="35" width="4" height="1.8" rx=".3" fill="#fafafa" stroke="none"/><rect x="21" y="35" width="5.9" height="1.8" rx=".3" fill="#fafafa" stroke="none"/><rect x="28.8" y="35" width="4.3" height="1.8" rx=".3" fill="#fafafa" stroke="none"/></svg><div class="lbl">005 020 File...</div></div>
<div class="cell" style="left:16px;top:445px"><svg class="ic" width="48" height="48" viewBox="0 0 48 48"><path d="M29.9 5.1H12.8a2.5 2.5 0 0 0-2.5 2.5V40.0a2.5 2.5 0 0 0 2.5 2.5H35.4a2.5 2.5 0 0 0 2.5-2.5V16.1"/><path d="M29.9 5.1V13.1H37.9z"/><path d="M24.15 5.1V26.6" stroke-width="2.5"/><path d="M21.3 8.7h2.5" stroke-width="1.8"/><path d="M21.3 12.7h2.5" stroke-width="1.8"/><path d="M21.3 16.7h2.5" stroke-width="1.8"/><path d="M21.3 20.7h2.5" stroke-width="1.8"/><path d="M21.3 23.6h2.5" stroke-width="1.8"/><path d="M24.5 6.5h2.3" stroke-width="1.8"/><path d="M24.5 10.8h2.3" stroke-width="1.8"/><path d="M24.5 14.9h2.3" stroke-width="1.8"/><path d="M24.5 18.9h2.3" stroke-width="1.8"/><path d="M24.5 22.9h2.3" stroke-width="1.8"/><rect x="21.4" y="27.1" width="5.3" height="8.5" rx="1.2"/><rect x="23.1" y="31" width="1.8" height="1.9" fill="#000" stroke="none"/></svg><div class="lbl">005 021 File...</div></div>
<div class="cell" style="left:126px;top:445px"><svg class="ic" width="48" height="48" viewBox="0 0 48 48"><path d="M29.9 5.1H12.8a2.5 2.5 0 0 0-2.5 2.5V40.0a2.5 2.5 0 0 0 2.5 2.5H35.4a2.5 2.5 0 0 0 2.5-2.5V16.1"/><path d="M29.9 5.1V13.1H37.9z"/><g transform="translate(.5 0)"><path d="M19.6 35.5V20.4L31.4 16.7V33.2"/><path d="M20.2 26.3L28.6 23.8"/><ellipse cx="16.8" cy="36.4" rx="2.9" ry="2.5"/><ellipse cx="28.6" cy="33.6" rx="2.9" ry="2.5"/></g></svg><div class="lbl">005 022 File...</div></div>
<div class="cell" style="left:237px;top:445px"><svg class="ic" width="48" height="48" viewBox="0 0 48 48"><path d="M29.9 5.1H12.8a2.5 2.5 0 0 0-2.5 2.5V40.0a2.5 2.5 0 0 0 2.5 2.5H35.4a2.5 2.5 0 0 0 2.5-2.5V16.1"/><path d="M29.9 5.1V13.1H37.9z"/><path d="M12.8 33.9L18 28.6L21.6 32.2"/><path d="M18 36.9L30 24.5L35 29.6"/></svg><div class="lbl">005 023 File...</div></div>
<div class="cell" style="left:347px;top:445px"><svg class="ic" width="48" height="48" viewBox="0 0 48 48"><path d="M29.9 5.1H12.8a2.5 2.5 0 0 0-2.5 2.5V40.0a2.5 2.5 0 0 0 2.5 2.5H35.4a2.5 2.5 0 0 0 2.5-2.5V16.1"/><path d="M29.9 5.1V13.1H37.9z"/><g transform="translate(.5 0)"><path d="M15.6 18.2V37H32"/><path d="M15.8 31.8L20.9 26.8L26.7 31.9L31 21.7"/><circle cx="20.9" cy="26.8" r="1.5" fill="#000"/><circle cx="26.7" cy="31.9" r="1.5" fill="#000"/><circle cx="31" cy="21.7" r="1.5" fill="#000"/></g></svg><div class="lbl">005 024 File...</div></div>
<div class="cell" style="left:458px;top:445px"><svg class="ic" width="48" height="48" viewBox="0 0 48 48"><path d="M29.9 5.1H12.8a2.5 2.5 0 0 0-2.5 2.5V40.0a2.5 2.5 0 0 0 2.5 2.5H35.4a2.5 2.5 0 0 0 2.5-2.5V16.1"/><path d="M29.9 5.1V13.1H37.9z"/><path d="M12.9 36.9H35.2"/><path d="M14.9 33.3V26.6a1.3 1.3 0 0 1 1.3-1.3h2.9a1.3 1.3 0 0 1 1.3 1.3V36.9"/><path d="M20.4 29h6.4"/><path d="M26.8 36.9V20.7a1.3 1.3 0 0 1 1.3-1.3h3.7a1.3 1.3 0 0 1 1.3 1.3V36.9"/></svg><div class="lbl">005 025 File...</div></div>
<div class="cell" style="left:16px;top:541px"><svg class="ic" width="48" height="48" viewBox="0 0 48 48"><path d="M29.9 5.1H12.8a2.5 2.5 0 0 0-2.5 2.5V40.0a2.5 2.5 0 0 0 2.5 2.5H35.4a2.5 2.5 0 0 0 2.5-2.5V16.1"/><path d="M29.9 5.1V13.1H37.9z"/><path d="M19.5 23.5L15.9 26.9L19.5 30.3" stroke-width="2.3"/><path d="M24.5 23.5L22.6 30.3" stroke-width="2.3"/><path d="M28.8 23.5L32.4 26.9L28.8 30.3" stroke-width="2.3"/></svg><div class="lbl">005 026 File...</div></div>
<div class="cell" style="left:126px;top:541px"><svg class="ic" width="48" height="48" viewBox="0 0 48 48"><g transform="translate(.5 0)"><path d="M14 2.7H12.3a2.5 2.5 0 0 0-2.5 2.5V38a2.5 2.5 0 0 0 2.5 2.5H23.9"/><path d="M15 22.8H25"/><path d="M14.8 34.6C17 33.5 19.8 30.5 19.2 28.2C18.7 26.5 16.8 27.2 17.2 29.8C17.5 32.5 18.5 35 21 34.8C22 34.7 22.8 34 23.4 33.5"/><path d="M38.04 32.70A2.41 2.41 0 0 1 34.80 35.94A2.41 2.41 0 0 1 30.20 35.94A2.41 2.41 0 0 1 26.96 32.70A2.41 2.41 0 0 1 26.96 28.10A2.41 2.41 0 0 1 30.20 24.86A2.41 2.41 0 0 1 34.80 24.86A2.41 2.41 0 0 1 38.04 28.10A2.41 2.41 0 0 1 38.04 32.70z"/><path d="M28.5 38.5V45M36.5 38.5V45"/></g></svg><div class="lbl">005 027 File...</div></div>
<div class="cell" style="left:237px;top:541px"><svg class="ic" width="48" height="48" viewBox="0 0 48 48"><path d="M4.4 18V36a2.3 2.3 0 0 0 2.3 2.3H22"/><path d="M43.6 18V36a2.3 2.3 0 0 1-2.3 2.3H40.5"/><path d="M9.4 16V29a2.8 2.8 0 0 0 2.8 2.8H22"/><path d="M14 23.6H22M14 27.5H22"/><circle cx="9" cy="33.6" r=".7" fill="#000"/><path d="M37.36 31.22A2.33 2.33 0 0 1 34.22 34.36A2.33 2.33 0 0 1 29.78 34.36A2.33 2.33 0 0 1 26.64 31.22A2.33 2.33 0 0 1 26.64 26.78A2.33 2.33 0 0 1 29.78 23.64A2.33 2.33 0 0 1 34.22 23.64A2.33 2.33 0 0 1 37.36 26.78A2.33 2.33 0 0 1 37.36 31.22z"/><path d="M26.7 35.4V45M37.5 35.4V45"/></svg><div class="lbl">005 028 File...</div></div>
<div class="cell" style="left:347px;top:541px"><svg class="ic" width="48" height="48" viewBox="0 0 48 48"><path d="M23.90 32.80A3.11 3.11 0 0 1 18.13 31.48A3.11 3.11 0 0 1 13.50 27.79A3.11 3.11 0 0 1 10.93 22.46A3.11 3.11 0 0 1 10.93 16.54A3.11 3.11 0 0 1 13.50 11.21A3.11 3.11 0 0 1 18.13 7.52A3.11 3.11 0 0 1 23.90 6.20A3.11 3.11 0 0 1 29.67 7.52A3.11 3.11 0 0 1 34.30 11.21A3.11 3.11 0 0 1 36.87 16.54A3.11 3.11 0 0 1 36.87 22.46A3.11 3.11 0 0 1 34.30 27.79A3.11 3.11 0 0 1 29.67 31.48A3.11 3.11 0 0 1 23.90 32.80z"/><circle cx="33.20" cy="19.50" r=".55" fill="#000"/><circle cx="32.64" cy="22.68" r=".55" fill="#000"/><circle cx="31.02" cy="25.48" r=".55" fill="#000"/><circle cx="28.55" cy="27.55" r=".55" fill="#000"/><circle cx="25.51" cy="28.66" r=".55" fill="#000"/><circle cx="22.29" cy="28.66" r=".55" fill="#000"/><circle cx="19.25" cy="27.55" r=".55" fill="#000"/><circle cx="16.78" cy="25.48" r=".55" fill="#000"/><circle cx="15.16" cy="22.68" r=".55" fill="#000"/><circle cx="14.60" cy="19.50" r=".55" fill="#000"/><circle cx="15.16" cy="16.32" r=".55" fill="#000"/><circle cx="16.78" cy="13.52" r=".55" fill="#000"/><circle cx="19.25" cy="11.45" r=".55" fill="#000"/><circle cx="22.29" cy="10.34" r=".55" fill="#000"/><circle cx="25.51" cy="10.34" r=".55" fill="#000"/><circle cx="28.55" cy="11.45" r=".55" fill="#000"/><circle cx="31.02" cy="13.52" r=".55" fill="#000"/><circle cx="32.64" cy="16.32" r=".55" fill="#000"/><path d="M13.9 29.7V46M33.9 35.3V46"/><path d="M18.5 43.5l5.4-4 5.4 4"/></svg><div class="lbl">005 029 File...</div></div>
<div class="cell" style="left:458px;top:541px"><svg class="ic" width="48" height="48" viewBox="0 0 48 48"><path d="M8.05 27.2V10.1a3 3 0 0 1 3-3H18.9"/><path d="M8.05 30V46"/><path d="M34.4 7.1H36.6a3 3 0 0 1 3 3V46"/><path d="M13.3 11.1a.9.9 0 0 0-.9.9V38.2a2.4 2.4 0 0 0 2.4 2.4H33.2a2.4 2.4 0 0 0 2.4-2.4V12a.9.9 0 0 0-.9-.9"/><path d="M16.1 7.4H19.6a4.4 4.4 0 0 1 8.8 0H31.9V12.7H16.1z"/><circle cx="24" cy="6.9" r=".9" fill="#000"/><path d="M21.4 18.9H26.6"/><path d="M17.6 24.8H30.7M17.6 28.8H30.7M17.6 32.8H30.7"/></svg><div class="lbl">005 030 File...</div></div>
  <div class="abs" style="left:562px;top:0;width:15px;height:593px;background:#f9f9f9;border-left:1px solid #ebebeb"></div>
  <div class="abs" style="left:566px;top:60px;width:8px;height:18px;border-radius:4px;background:#c2c2c2"></div>
  <div class="abs" style="left:159.5px;top:541.5px;width:257px;height:31.5px;border-radius:7px;background:#fafafa;box-shadow:0 1px 4px rgba(0,0,0,.10),0 0 0 .5px rgba(0,0,0,.06)">
   <svg class="abs" style="left:7.4px;top:8px" width="14" height="14" viewBox="0 0 14 14"><g fill="none" stroke="#7b7a7f" stroke-width="1.1"><rect x="1.5" y="1.5" width="4" height="4" rx=".8"/><rect x="8.5" y="1.5" width="4" height="4" rx=".8"/><rect x="1.5" y="8.5" width="4" height="4" rx=".8"/><rect x="8.5" y="8.5" width="4" height="4" rx=".8"/></g></svg>
   <div class="abs" style="left:27.5px;top:14px;width:120px;height:4px;border-radius:2px;background:#e4e4e6"></div>
   <div class="abs" style="left:27.5px;top:14px;width:24px;height:4px;border-radius:2px;background:#3d7bf2"></div>
   <div class="abs" style="left:41.5px;top:8px;width:16px;height:16px;border-radius:50%;background:#fff;box-shadow:0 0 0 .5px rgba(0,0,0,.15),0 1px 2px rgba(0,0,0,.18)"></div>
   <svg class="abs" style="left:154.5px;top:6.5px" width="18" height="18" viewBox="0 0 18 18"><g fill="#ececee" stroke="#6f6e73" stroke-width="1.2"><rect x="1.5" y="1.5" width="6" height="6" rx="1"/><rect x="10.5" y="1.5" width="6" height="6" rx="1"/><rect x="1.5" y="10.5" width="6" height="6" rx="1"/><rect x="10.5" y="10.5" width="6" height="6" rx="1"/></g></svg>
   <div class="abs" style="left:182.5px;top:0;width:1px;height:31.5px;background:#ebebed"></div>
   <div class="abs" style="left:196px;top:0;height:31.5px;line-height:31.5px;font-size:13px;color:#2e2e31;white-space:nowrap">48pt</div>
   <svg class="abs" style="left:237px;top:9.5px" width="12" height="14" viewBox="0 0 12 14"><path d="M2.5 5l3.5-3.5 3.5 3.5M2.5 9l3.5 3.5 3.5-3.5" fill="none" stroke="#4a4a4e" stroke-width="1.3" stroke-linecap="round" stroke-linejoin="round"/></svg>
  </div>
 </div>

 <div class="abs" style="left:0;top:0;width:1041px;height:646px;border-radius:10px;box-shadow:inset 0 .8px 0 rgba(255,255,255,.85),inset .8px 0 0 rgba(255,255,255,.5),inset -.8px 0 0 rgba(255,255,255,.5);z-index:5;pointer-events:none"></div>
 <div id="insp">
  <div class="abs" style="left:16.3px;top:10.3px;width:207px;height:25.5px;border-radius:6px;background:#e2e0e5;border:.5px solid #d8d6db"></div>
  <div class="abs" style="left:16.5px;top:10.5px;width:102.5px;height:25px;border-radius:6px;background:#fff;box-shadow:0 0 0 .5px rgba(0,0,0,.16),0 .5px 1px rgba(0,0,0,.08)"></div>
  <div class="abs" style="left:16px;top:10px;width:103px;height:26px;line-height:26px;text-align:center;font-size:13px;color:#2e2e31">Icon Set</div>
  <div class="abs" style="left:120px;top:10px;width:103px;height:26px;line-height:26px;text-align:center;font-size:13px;color:#3a3a3e">Selection</div>
  <div class="abs" style="left:0;top:48px;width:240px;height:1px;background:#d9d7dc"></div>
  <div class="field" style="top:66px;height:27px;line-height:25px;padding-left:6.5px;color:#222">Infinity Outline</div>
  <div class="field" style="top:102px;height:26px;line-height:24px;padding-left:6.5px;color:#b9b7bc">Description</div>
  <div class="field" style="top:137px;height:26px;line-height:24px;padding-left:10px;color:#222;box-shadow:0 .5px 1px rgba(0,0,0,.08)">No License</div>
  <div class="abs" style="left:202px;top:140px;width:19px;height:20px;border-radius:5px;background:linear-gradient(#6a9cf6,#3f72e6)"></div>
  <svg class="abs" style="left:202px;top:140px" width="19" height="20" viewBox="0 0 19 20"><path d="M6.3 7.8l3.2-3.2 3.2 3.2M6.3 12.2l3.2 3.2 3.2-3.2" fill="none" stroke="#fff" stroke-width="1.4" stroke-linecap="round" stroke-linejoin="round"/></svg>
  <div class="rowl" style="top:177px;line-height:18px">Icon Count</div><div class="rowv" style="top:177px;line-height:18px">1705 Icons</div>
  <div class="rowl" style="top:198px;line-height:18px">Import Date</div><div class="rowv" style="top:198px;line-height:18px">20 Mar 2025</div>
  <div class="rowl" style="top:219px;line-height:18px">File Size</div><div class="rowv" style="top:219px;line-height:18px">3,1 MB</div>
  <div class="rowl" style="top:240px;line-height:18px">Selection</div><div class="rowv" style="top:240px;line-height:18px">30 Sets</div>
  <div class="abs" style="left:44px;top:278.3px;width:152px;height:23.5px;border-radius:6px;background:#fff;border:.5px solid #d3d1d6;box-shadow:0 .5px 1.5px rgba(0,0,0,.12)"></div>
  <svg class="abs" style="left:63px;top:284px" width="12" height="12" viewBox="0 0 12 12"><circle cx="5.3" cy="5.6" r="3" fill="#5aa2ee"/><circle cx="5.9" cy="7.2" r="2.3" fill="#9fd0fa" stroke="#2c3540" stroke-width="1"/><path d="M7.6 8.9l1.7 1.7" stroke="#2c3540" stroke-width="1.1" stroke-linecap="round"/></svg>
  <div class="abs" style="left:80px;top:279.5px;height:23px;line-height:23px;font-size:12px;color:#3a3a3e;white-space:nowrap;letter-spacing:.2px">Export<span style="display:inline-block;width:13px"></span>IconJar...</div><svg class="abs" style="left:119px;top:286px" width="6" height="10" viewBox="0 0 6 10"><path d="M1.5 1.5l3 3.5-3 3.5" fill="none" stroke="#8a898e" stroke-width="1"/></svg>
 </div>
</div>
</body></html>
